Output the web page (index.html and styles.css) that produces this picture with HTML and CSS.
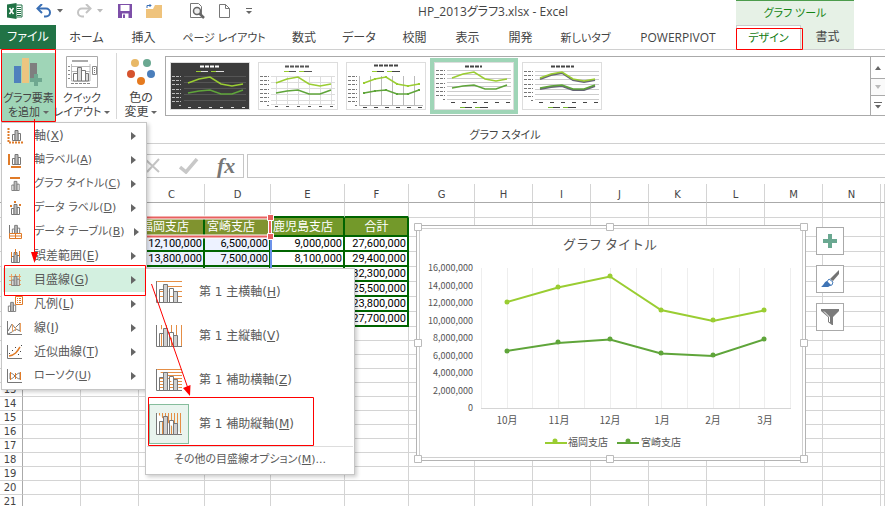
FILE: index.html
```html
<!DOCTYPE html>
<html lang="ja">
<head>
<meta charset="utf-8">
<title>HP_2013グラフ3.xlsx - Excel</title>
<link rel="stylesheet" href="styles.css">
</head>
<body>
<svg class="defs" aria-hidden="true">
  <symbol id="bars" viewBox="0 0 10 12"><path d="M1 5.500h2.500v6H1zM6.500 4.500H9v7H6.500z" fill="#fff" stroke="#777"/><path d="M3.500 1.500h3v10h-3z" fill="#bbb" stroke="#777"/></symbol>
  <symbol id="bigbars" viewBox="0 0 26 22"><path d="M.5 0v21.500H26M3.500 21V8.500h4V21M13.500 21V7.500h4V21" fill="#fff" stroke="#777"/><path d="M7.500 21.500v-18h4v18zM17.500 21.500v-11h4v11z" fill="#d0d0d0" stroke="#777"/></symbol>
  <symbol id="thumblines" viewBox="0 0 80 48"><path d="M18 21 29 17 40 15 51 22 62 24 73 22" fill="none" stroke="#9acd32" stroke-width="1.500"/><path d="M18 31 29 29 40 28 51 32 62 32 73 28" fill="none" stroke="#5fa53a" stroke-width="1.500"/></symbol>
  <symbol id="thumbmarks" viewBox="0 0 80 48"><path d="M2 14.500h9M2 18.500h9M2 22.500h9M2 27.500h9M2 31.500h9M2 35.500h9M2 39.500h9M9 43.500h2" stroke-dasharray="3 1" stroke="currentColor"/></symbol>
</svg>

<header class="top">
  <div class="titlebar">
    <div class="qat">
      <svg class="xl" width="16" height="16" viewBox="0 0 16 16"><path d="M8 2h7v12H8z" fill="#fff" stroke="#217346"/><path d="M10 4.500h4M10 6.500h4M10 8.500h4M10 10.500h4M10 12.500h4" stroke="#217346"/><path d="M0 1.500 9.500 0v16L0 14.500z" fill="#217346"/><path d="m2.500 5 4 6m0-6-4 6" stroke="#fff" stroke-width="1.500"/></svg>
      <svg class="undo" width="16" height="14" viewBox="0 0 16 14"><path d="M2 4.500h8a4 4 0 0 1 0 8H8" fill="none" stroke="#3a6fb5" stroke-width="2"/><path d="M6 0 1.500 4.500 6 9" fill="none" stroke="#3a6fb5" stroke-width="2"/></svg>
      <svg class="c1" width="6" height="4"><path d="M0 0h6L3 3.500z" fill="#666"/></svg>
      <svg class="redo" width="16" height="14" viewBox="0 0 16 14"><path d="M14 4.500H6a4 4 0 0 0 0 8h2" fill="none" stroke="#c4c4c4" stroke-width="2"/><path d="m10 0 4.500 4.500L10 9" fill="none" stroke="#c4c4c4" stroke-width="2"/></svg>
      <svg class="c2" width="6" height="4"><path d="M0 0h6L3 3.500z" fill="#bbb"/></svg>
      <svg class="save" width="14" height="14"><path d="M0 0h14v14H0z" fill="#7d4fa8"/><path d="M2.500 1h9v6h-9zM4 9.500h6.500V14H4z" fill="#fff"/><path d="M5 10.500h2V14H5z" fill="#7d4fa8"/></svg>
      <svg class="folder" width="16" height="14" viewBox="0 0 16 14"><path d="M0 5h7l2-4h7v13H0z" fill="#efc37c"/><path d="M1 4V1.500h4M3.500 0 5 1.500 3.500 3" fill="none" stroke="#3a6fb5"/></svg>
      <span class="vsep"></span>
      <svg class="preview" width="15" height="16" viewBox="0 0 15 16"><path d="M.5.500h8l3 3v11H.5z" fill="#fff" stroke="#777"/><circle cx="7" cy="8" r="3.500" fill="#eee" stroke="#666" stroke-width="1.500"/><path d="m9.500 10.500 4.500 4.500" stroke="#666" stroke-width="2.500"/></svg>
      <svg class="page" width="11" height="14"><path d="M.5.500h6l4 4v9H.5zM6.500.500v4h4" fill="#fff" stroke="#777"/></svg>
      <svg width="6" height="7"><path d="M0 .5h6" stroke="#666"/><path d="M0 3h6L3 6z" fill="#666"/></svg>
    </div>
    <h1>HP_2013グラフ3.xlsx - Excel</h1>
  </div>
  <nav class="tabs">
    <button class="file">ファイル</button><button>ホーム</button><button>挿入</button><button class="kana">ページ レイアウト</button><button>数式</button><button>データ</button><button>校閲</button><button>表示</button><button>開発</button><button class="kana">新しいタブ</button><button>POWERPIVOT</button>
  </nav>
  <div class="context">
    <div class="context-name kana">グラフ ツール</div>
    <div class="context-tabs"><button class="active kana">デザイン</button><button>書式</button></div>
  </div>
</header>

<section class="ribbon">
  <div class="commands">
    <button class="cmd pressed">
      <svg width="30" height="30" viewBox="0 0 30 30"><path d="M1 9h7v17H1z" fill="#4f81bd"/><path d="M9 1h7v25H9z" fill="#ecc580"/><path d="M17 6h7v16h-7z" fill="#7f7f7f"/><path d="M21 17h4v4h4v4h-4v4h-4v-4h-4v-4h4z" fill="#6fa890"/></svg>
      <span>グラフ要素</span><span>を追加<i class="caret"></i></span>
    </button>
    <button class="cmd">
      <svg width="32" height="32" viewBox="0 0 32 32"><path d="M.5.500h31v31H.5z" fill="#fff" stroke="#aaa"/><path d="M6 5h16" stroke="#aaa" stroke-width="2"/><path d="M5.500 8v17H24V8M6 10.500h18M6 15.500h18" fill="none" stroke="#bbb"/><path d="M2 10.500h2M2 14.500h2M2 18.500h2M2 22.500h2M5 27.500h20" stroke="#888" stroke-dasharray="3 1"/><path d="M7.500 17.500h4V25h-4zM15.500 14.500h4V25h-4z" fill="#fff" stroke="#777"/><path d="M11.500 11.500h4V25h-4zM19.500 17.500h3V25h-3z" fill="#ddd" stroke="#777"/><path d="M26.500 10.500h4v8h-4z" fill="#fff" stroke="#888"/><path d="M28 12.500h1M28 14.500h1M28 16.500h1" stroke="#777"/></svg>
      <span>クイック</span><span>レイアウト<i class="caret"></i></span>
    </button>
    <span class="rsep"></span>
    <button class="cmd colors">
      <svg width="30" height="30" viewBox="0 0 30 30"><circle cx="9" cy="6" r="4" fill="#e8b866"/><circle cx="21" cy="6" r="4" fill="#6aa891"/><circle cx="5" cy="17" r="4" fill="#d6532d"/><circle cx="25" cy="17" r="4" fill="#4a7ebb"/><circle cx="15" cy="24" r="4" fill="#e57a1f"/></svg>
      <span>色の</span><span>変更<i class="caret"></i></span>
    </button>
  </div>
  <div class="styles">
    <div class="gallery">
      <button class="thumb dark" aria-label="1"><svg width="78" height="46" viewBox="1 1 78 46"><path d="M14 14.500h62M14 20.500h62M14 26.500h62M14 32.500h62M14 38.500h62" stroke="#555"/><path d="M30 4.500h19" stroke="#fff" stroke-width="2" stroke-dasharray="4 1"/><path d="M26 9.500h5M41 9.500h5" stroke="#9acd32"/><path d="M31 9.500h7M46 9.500h8M18 45.500h3M28 45.500h3M39 45.500h3M50 45.500h3M61 45.500h3M72 45.500h3" stroke="#ddd"/><use href="#thumbmarks" width="80" height="48"/><use href="#thumblines" width="80" height="48"/></svg></button>
      <button class="thumb" aria-label="2"><svg width="78" height="46" viewBox="1 1 78 46"><path d="M13 14.500h64M13 20.500h64M13 26.500h64M13 32.500h64M13 38.500h64M13 42.500h64M18.500 14v28M29.500 14v28M40.500 14v28M51.500 14v28M62.500 14v28M73.500 14v28" stroke="#ddd"/><path d="M27 4.500h24" stroke="#555" stroke-width="2" stroke-dasharray="4 1"/><path d="M26 9.500h5M41 9.500h5" stroke="#9acd32"/><path d="M31 9.500h7M46 9.500h8M17 44.500h3M28 44.500h3M39 44.500h3M50 44.500h3M61 44.500h3M72 44.500h3" stroke="#555"/><use href="#thumbmarks" width="80" height="48"/><use href="#thumblines" width="80" height="48"/></svg></button>
      <button class="thumb" aria-label="3"><svg width="78" height="46" viewBox="1 1 78 46"><path d="M13.500 14v29M24.500 14v29M35.500 14v29M46.500 14v29M57.500 14v29M68.500 14v29M13 43.500h64" stroke="#bbb"/><path d="M28 3.500h24" stroke="#444" stroke-width="2" stroke-dasharray="4 1"/><path d="M26 9.500h5M41 9.500h5" stroke="#9acd32"/><path d="M31 9.500h7M46 9.500h8M17 45.500h4M28 45.500h4M39 45.500h4M50 45.500h4M61 45.500h4M72 45.500h4" stroke="#444"/><use href="#thumbmarks" width="80" height="48"/><use href="#thumblines" width="80" height="48"/><path d="M17 20h2v2h-2zM28 16h2v2h-2zM39 14h2v2h-2zM50 21h2v2h-2zM61 23h2v2h-2zM72 21h2v2h-2z" fill="#9acd32"/><path d="M17 30h2v2h-2zM28 28h2v2h-2zM39 27h2v2h-2zM50 31h2v2h-2zM61 31h2v2h-2zM72 27h2v2h-2z" fill="#5fa53a"/></svg></button>
      <button class="thumb chosen" aria-label="4"><svg width="78" height="46" viewBox="1 1 78 46"><path d="M13 8.500h64M13 12.500h64M13 16.500h64M13 20.500h64M13 24.500h64M13 29.500h64M13 33.500h64M13 37.500h64" stroke="#ccc"/><path d="M31 4.500h17" stroke="#444" stroke-width="2" stroke-dasharray="4 1"/><path d="M17 40.500h4M28 40.500h4M39 40.500h4M50 40.500h4M61 40.500h4M72 40.500h4M31 45.500h7M46 45.500h8" stroke="#444"/><path d="M26 45.500h5M41 45.500h5" stroke="#76b82f"/><use href="#thumbmarks" y="-6" width="80" height="48"/><use href="#thumblines" y="-5" width="80" height="48"/></svg></button>
      <button class="thumb" aria-label="5"><svg width="78" height="46" viewBox="1 1 78 46"><path d="M13 9.500h64M13 13.500h64M13 17.500h64M13 22.500h64M13 27.500h64M13 32.500h64M13 37.500h64" stroke="#ccc"/><path d="M29 4.500h23" stroke="#444" stroke-width="2" stroke-dasharray="4 1"/><path d="M18 17 29 13 40 11 51 18 62 20 73 18M18 27 29 25 40 24 51 28 62 28 73 24" fill="none" stroke="#667" stroke-width="2"/><path d="M17 40.500h4M28 40.500h4M39 40.500h4M50 40.500h4M61 40.500h4M72 40.500h4M31 45.500h7M46 45.500h8" stroke="#444"/><path d="M26 45.500h5M41 45.500h5" stroke="#76b82f"/><use href="#thumbmarks" y="-5" width="80" height="48"/><use href="#thumblines" y="-5" width="80" height="48"/></svg></button>
      <div class="scroll">
        <button aria-label="上"><svg width="6" height="4"><path d="M0 4h6L3 0z" fill="#666"/></svg></button>
        <button class="off" aria-label="下"><svg width="6" height="4"><path d="M0 0h6L3 4z" fill="#bbb"/></svg></button>
        <button aria-label="その他"><svg width="8" height="7"><path d="M0 .5h8" stroke="#666"/><path d="M1 3h6L4 6.500z" fill="#666"/></svg></button>
      </div>
    </div>
    <div class="group-name kana">グラフ スタイル</div>
  </div>
</section>

<section class="formula">
  <div class="fxbox">
    <svg width="16" height="16" viewBox="0 0 16 16"><path d="m1 2 13 12M14 1 2 14" stroke="#c4c4c4" stroke-width="2"/></svg>
    <svg width="20" height="16" viewBox="0 0 20 16"><path d="m1 9 6 5L18 1" fill="none" stroke="#c8c8c8" stroke-width="3.500"/></svg>
    <span class="fx">fx</span>
  </div>
  <input aria-label="数式バー">
</section>

<main class="sheet">
  <table>
    <colgroup><col class="w23"><col class="w58"><col class="w58"><col class="w66"><col class="w66"><col class="w74"><col class="w64"><col class="w66"><col class="w58"><col class="w58"><col class="w58"><col class="w58"><col class="w58"><col class="w58"><col class="w58"><col></colgroup>
    <thead><tr><th><th><th><th>C<th>D<th>E<th>F<th>G<th>H<th>I<th>J<th>K<th>L<th>M<th>N<th></tr></thead>
    <tbody>
    <tr class="r1"><th><td><td><td class="g"><td class="g"><td class="g"><td class="g"><td><td><td><td><td><td><td><td><td></tr>
    <tr class="r2"><th><td><td><td class="d h s">福岡支店<td class="d h s">宮崎支店<td class="d h">鹿児島支店<td class="d h mid">合計<td><td><td><td><td><td><td><td><td></tr>
    <tr class="rd"><th><td><td><td class="d v">12,100,000<td class="d v">6,500,000<td class="d">9,000,000<td class="d">27,600,000<td><td><td><td><td><td><td><td><td></tr>
    <tr class="rd"><th><td><td><td class="d v">13,800,000<td class="d v">7,500,000<td class="d">8,100,000<td class="d">29,400,000<td><td><td><td><td><td><td><td><td></tr>
    <tr class="rd"><th><td><td><td class="d v"><td class="d v"><td class="d"><td class="d">32,300,000<td><td><td><td><td><td><td><td><td></tr>
    <tr class="rd"><th><td><td><td class="d v"><td class="d v"><td class="d"><td class="d">25,500,000<td><td><td><td><td><td><td><td><td></tr>
    <tr class="rd"><th><td><td><td class="d v"><td class="d v"><td class="d"><td class="d">23,800,000<td><td><td><td><td><td><td><td><td></tr>
    <tr class="rd"><th><td><td><td class="d v"><td class="d v"><td class="d"><td class="d">27,700,000<td><td><td><td><td><td><td><td><td></tr>
    <tr><th><td><td><td><td><td><td><td><td><td><td><td><td><td><td><td></tr>
    <tr><th><td><td><td><td><td><td><td><td><td><td><td><td><td><td><td></tr>
    <tr><th><td><td><td><td><td><td><td><td><td><td><td><td><td><td><td></tr>
    <tr><th><td><td><td><td><td><td><td><td><td><td><td><td><td><td><td></tr>
    <tr><th>13<td><td><td><td><td><td><td><td><td><td><td><td><td><td><td></tr>
    <tr><th>14<td><td><td><td><td><td><td><td><td><td><td><td><td><td><td></tr>
    <tr><th>15<td><td><td><td><td><td><td><td><td><td><td><td><td><td><td></tr>
    <tr><th>16<td><td><td><td><td><td><td><td><td><td><td><td><td><td><td></tr>
    <tr><th>17<td><td><td><td><td><td><td><td><td><td><td><td><td><td><td></tr>
    <tr><th>18<td><td><td><td><td><td><td><td><td><td><td><td><td><td><td></tr>
    <tr><th>19<td><td><td><td><td><td><td><td><td><td><td><td><td><td><td></tr>
    <tr><th>20<td><td><td><td><td><td><td><td><td><td><td><td><td><td><td></tr>
    <tr><th>21<td><td><td><td><td><td><td><td><td><td><td><td><td><td><td></tr>
    </tbody>
  </table>
</main>

<svg class="layer" width="885" height="506" aria-hidden="true">
  <path d="M139 217.500h131v19H139" fill="none" stroke="#fff" stroke-width="4"/>
  <path d="M139 217.500h131v19H139" fill="none" stroke="#e8605f" stroke-width="2"/>
  <path d="M271 239v30" stroke="#6d93ea" stroke-width="2"/>
  <path d="M267.500 214.500h6v6h-6zM267.500 233.500h6v6h-6z" fill="#e8605f" stroke="#fff"/>
</svg>

<svg class="chart" width="396" height="242" viewBox="413 222 396 242" role="img" aria-label="グラフ タイトル">
  <path d="M416.500 225.500h389v235h-389z" fill="#fff" stroke="#b4b4b4"/>
  <path d="M419.500 228.500h383v229h-383z" fill="#fff" stroke="#d0d0d0"/>
  <path d="M481.500 268v140M507.500 268v140M532.500 268v140M558.500 268v140M584.500 268v140M610.500 268v140M636.500 268v140M661.500 268v140M687.500 268v140M713.500 268v140M739.500 268v140M764.500 268v140M790.500 268v140" stroke="#eee"/>
  <path d="M481 408.500h310" stroke="#d5d5d5"/>
  <text class="ctitle" x="610" y="249">グラフ タイトル</text>
  <g class="vals"><text x="473" y="271">16,000,000</text><text x="473" y="289">14,000,000</text><text x="473" y="306">12,000,000</text><text x="473" y="324">10,000,000</text><text x="473" y="341">8,000,000</text><text x="473" y="359">6,000,000</text><text x="473" y="376">4,000,000</text><text x="473" y="394">2,000,000</text><text x="473" y="411">0</text></g>
  <g class="cats"><text x="507" y="424">10月</text><text x="559" y="424">11月</text><text x="610" y="424">12月</text><text x="662" y="424">1月</text><text x="713" y="424">2月</text><text x="765" y="424">3月</text></g>
  <g fill="none" stroke-width="2"><path d="m507 302 51-14.500 52-11 51 33.500 52 11 51-10.500M545 443h22" stroke="#9acd32"/><path d="m507 351 51-8 52-3.500 51 14 52 2.500 51-16.500M617 443h22" stroke="#5fa53a"/></g>
  <g fill="#9acd32"><circle cx="507" cy="302" r="2.500"/><circle cx="558" cy="287" r="2.500"/><circle cx="610" cy="276" r="2.500"/><circle cx="661" cy="310" r="2.500"/><circle cx="713" cy="320" r="2.500"/><circle cx="764" cy="310" r="2.500"/><circle cx="555" cy="441" r="2.500"/></g>
  <g fill="#5fa53a"><circle cx="507" cy="351" r="2.500"/><circle cx="558" cy="342" r="2.500"/><circle cx="610" cy="339" r="2.500"/><circle cx="661" cy="353" r="2.500"/><circle cx="713" cy="355" r="2.500"/><circle cx="764" cy="339" r="2.500"/><circle cx="628" cy="441" r="2.500"/></g>
  <g class="leg"><text x="568" y="446">福岡支店</text><text x="641" y="446">宮崎支店</text></g>
  <path d="M414.500 223.500h7v7h-7zM606.500 223.500h7v7h-7zM800.500 223.500h7v7h-7zM414.500 339.500h7v7h-7zM800.500 339.500h7v7h-7zM414.500 455.500h7v7h-7zM606.500 455.500h7v7h-7zM800.500 455.500h7v7h-7z" fill="#fff" stroke="#bbb"/>
</svg>

<div class="chart-tools">
  <button aria-label="グラフ要素"><svg width="14" height="14"><path d="M5 0h4v5h5v4H9v5H5V9H0V5h5z" fill="#6aa891"/></svg></button>
  <button aria-label="グラフ スタイル"><svg width="18" height="18" viewBox="0 0 18 18"><path d="M18 0v4l-6 7-3-2z" fill="#737373"/><path d="m8 9 4 3-1 3-4 1-2-3z" fill="#fff" stroke="#4a7ebb"/><path d="M6 11c-3 1-3 4-6 6h7l3-2z" fill="#3f74b5"/></svg></button>
  <button aria-label="グラフ フィルター"><svg width="18" height="17" viewBox="0 0 18 17"><path d="M0 0h18v2l-6 6v8h-1L7 13V8L0 2z" fill="#7b7b7b"/><path d="M3 2.500 8.500 8v5" fill="none" stroke="#fff"/></svg></button>
</div>

<div class="menu" role="menu">
  <button role="menuitem"><svg width="18" height="16"><path d="M2.500 0v14.500H18" fill="none" stroke="#e07b28" stroke-width="2" stroke-dasharray="2 1"/><use href="#bars" x="5" y="1" width="11" height="12"/></svg><span>軸(<u>X</u>)</span></button>
  <button role="menuitem"><svg width="18" height="16"><path d="M3 2v11M5 15h10" stroke="#e07b28" stroke-width="2"/><use href="#bars" x="5" y="1" width="11" height="12"/></svg><span class="kana">軸ラベル(<u>A</u>)</span></button>
  <button role="menuitem"><svg width="18" height="16"><path d="M4 2h10" stroke="#e07b28" stroke-width="2"/><use href="#bars" x="4" y="4" width="11" height="11"/></svg><span class="kana">グラフ タイトル(<u>C</u>)</span></button>
  <button role="menuitem"><svg width="18" height="16"><path d="M4 5h2v2H4zM8 1h2v2H8zM13 4h2v2h-2z" fill="#e07b28"/><use href="#bars" x="4" y="3" width="11" height="12"/></svg><span class="kana">データ ラベル(<u>D</u>)</span></button>
  <button role="menuitem"><svg width="18" height="16"><path d="M3.500 1v9" stroke="#777"/><use href="#bars" x="5" y="0" width="10" height="11"/><path d="M3.500 9.500h12v5h-12zM3 12h13M9.500 9.500v5" fill="#fff" stroke="#e07b28"/></svg><span class="kana">データ テーブル(<u>B</u>)</span></button>
  <button role="menuitem"><svg width="18" height="16"><use href="#bars" x="4" y="3" width="11" height="12"/><path d="M5.500 4v6M9.500 1v6M13.500 3v6" stroke="#e07b28"/></svg><span>誤差範囲(<u>E</u>)</span></button>
  <button role="menuitem" class="on"><svg width="18" height="16"><path d="M3 4.500h12M3 8.500h12M3 12.500h12M5.500 2v12M9.500 2v12M13.500 2v12" stroke="#e9a163"/><use href="#bars" x="4" y="3" width="11" height="11"/></svg><span>目盛線(<u>G</u>)</span></button>
  <button role="menuitem"><svg width="18" height="18"><use href="#bars" x="1" y="6" width="10" height="11"/><path d="M9.500 1.500h7v8h-7z" fill="#fff" stroke="#e07b28"/><path d="M11 3.500h1m1 0h2M11 5.500h1m1 0h2M11 7.500h1m1 0h2" stroke="#e07b28"/></svg><span>凡例(<u>L</u>)</span></button>
  <button role="menuitem"><svg width="18" height="16"><path d="M1.500 1v13.500H16M2 11l4-7 3 4 5-5v8l-4-2-4 3-4 2" fill="none" stroke="#777"/><path d="M6.500 4v8M9.500 7v4M14.500 3v9" stroke="#e9a163"/></svg><span>線(<u>I</u>)</span></button>
  <button role="menuitem"><svg width="18" height="16"><path d="M1.500 1v13.500H16" fill="none" stroke="#777"/><path d="M3 12c6-1 8-4 11-9" fill="none" stroke="#e07b28" stroke-width="1.500"/><path d="M3 9h1v1H3zM6 6h1v1H6zM9 3h1v1H9zM12 10h1v1h-1zM14 7h1v1h-1zM15 1h1v1h-1z" fill="#444"/></svg><span>近似曲線(<u>T</u>)</span></button>
  <button role="menuitem"><svg width="18" height="16"><path d="M1.500 1v13.500H16" fill="none" stroke="#777"/><path d="M4 5c4 0 6 6 10 6V5c-4 0-6 6-10 6z" fill="none" stroke="#777"/><path d="M4.500 4v8M9.500 5v6M14.500 4v8" stroke="#e07b28"/></svg><span class="kana">ローソク(<u>U</u>)</span></button>
</div>

<div class="submenu" role="menu">
  <button role="menuitem"><i class="pic"><svg width="26" height="22"><path d="M0 .5h26M0 5.500h26M0 10.500h26M0 15.500h26" stroke="#e58e45"/><use href="#bigbars" width="26" height="22"/></svg></i><span>第 1 主横軸(<u>H</u>)</span></button>
  <button role="menuitem"><i class="pic"><svg width="26" height="22"><path d="M5.500 0v21M10.500 0v21M15.500 0v21M20.500 0v21M25.500 0v21" stroke="#e58e45"/><use href="#bigbars" width="26" height="22"/></svg></i><span>第 1 主縦軸(<u>V</u>)</span></button>
  <button role="menuitem"><i class="pic"><svg width="26" height="22"><path d="M0 .5h26M0 3.500h26M0 6.500h26M0 9.500h26M0 12.500h26M0 15.500h26M0 18.500h26" stroke="#e58e45"/><use href="#bigbars" width="26" height="22"/></svg></i><span>第 1 補助横軸(<u>Z</u>)</span></button>
  <button role="menuitem"><i class="pic picked"><svg width="26" height="22"><path d="M3.500 0v21M6.500 0v21M9.500 0v21M12.500 0v21M15.500 0v21M18.500 0v21M21.500 0v21M24.500 0v21" stroke="#e58e45"/><use href="#bigbars" width="26" height="22"/></svg></i><span>第 1 補助縦軸(<u>M</u>)</span></button>
  <hr>
  <button role="menuitem" class="more kana"><span>その他の目盛線オプション(<u>M</u>)...</span></button>
</div>

<svg class="layer notes" width="885" height="506" aria-hidden="true">
  <g fill="none" stroke="#f00"><path d="M1.500 49.500h54v72h-54zM736.500 28.500h66v21h-66zM4.500 265.500h141v30h-141zM148.500 397.500h165v48h-165zM34.500 119v136M151.500 284l36 103" /></g>
  <path d="M31 252h7l-3.500 11zM183 388l7.500-3-.5 11z" fill="#f00"/>
</svg>
</body>
</html>
```
FILE: styles.css
```css
* { box-sizing: border-box; }
body {
  margin: 0;
  height: 100vh;
  overflow: hidden;
  position: relative;
  background: #fff;
  color: #444;
  font: 12px/14px "Open Sans", "Noto Sans CJK JP", sans-serif;
  font-feature-settings: "palt";
}
button {
  font: inherit;
  font-feature-settings: inherit;
  color: inherit;
  background: none;
  border: 0;
  padding: 0;
  white-space: nowrap;
}
svg { display: block; flex: none; }
.defs { position: absolute; width: 0; height: 0; }
.kana { font-size: 11px; }

/* title bar and tabs */
.top {
  display: grid;
  grid-template-columns: 1fr 118px 31px;
  grid-template-rows: 25px 25px;
  border-bottom: 1px solid #d0d0d0;
  height: 50px;
}
.titlebar { display: flex; align-items: center; }
.qat { display: flex; align-items: center; width: 250px; height: 22px; padding-left: 7px; }
.xl { margin-right: 13px; }
.undo { margin-right: 5px; }
.c1 { margin-right: 13px; }
.redo { margin-right: 5px; }
.c2 { margin-right: 15px; }
.save { margin-right: 14px; }
.folder { margin-right: 13px; }
.vsep { width: 1px; height: 16px; background: #d8d8d8; margin-right: 15px; }
.preview { margin-right: 14px; }
.page { margin-right: 16px; }
.titlebar { align-items: flex-start; }
h1 { flex: 1; margin: 0; font-size: 12px; line-height: 23px; font-weight: 400; text-align: center; }
.tabs {
  grid-row: 2;
  display: grid;
  grid-template-columns: 56px 61px 53px 108px 52px 58px 53px 53px 53px 77px 108px;
}
.tabs .file { background: #217346; color: #fff; height: 24px; }
.context {
  grid-column: 2;
  grid-row: 1 / 3;
  height: 49px;
  display: grid;
  grid-template-rows: 24px 24px;
  background: #e6f1e6;
  border-top: 1px solid #4c9c4c;
}
.context-name { text-align: center; line-height: 23px; color: #158515; }
.context-tabs { display: grid; grid-template-columns: 65px 53px; font-size: 12px; }
.context-tabs .active { background: #fff; border: 1px solid #ccc; border-bottom: 0; color: #117a11; }

/* ribbon */
.ribbon { display: flex; height: 94px; border-bottom: 1px solid #d0d0d0; }
.commands { display: flex; width: 165px; padding: 3px 0 0 2px; }
.cmd { display: flex; flex-direction: column; align-items: center; width: 54px; height: 68px; font-size: 11px; }
.cmd svg { margin: 3px 0; height: 32px; }
.cmd.pressed { background: #9fd5b7; }
.cmd.colors { width: 49px; font-size: 12px; }
.rsep { width: 1px; height: 66px; background: #d8d8d8; margin-left: 7px; }
.caret { display: inline-block; border: 3px solid transparent; border-top-color: #666; border-bottom: 0; margin: 0 0 2px 3px; }
.styles { flex: 1; min-width: 0; padding-top: 6px; }
.gallery { display: flex; height: 60px; border: 1px solid #aaa; border-right: 0; background: #fff; }
.thumb { width: 88px; height: 56px; margin-top: 1px; border: 4px solid transparent; }
.thumb svg { border: 1px solid #ddd; width: 80px; height: 48px; color: #777; }
.thumb.dark svg { background: #3c3c3c; color: #bbb; }
.thumb.chosen { border-color: #9fd5b7; }
.scroll { margin-left: auto; width: 15px; display: grid; grid-template-rows: 21px 18px 19px; border-left: 1px solid #aaa; }
.scroll button { display: grid; place-items: center; }
.scroll .off { border: solid #aaa; border-width: 1px 0; background: #fafafa; }
.group-name { padding: 12px 40px 0 0; text-align: center; }

/* formula bar */
.formula { display: flex; gap: 3px; height: 40px; padding: 10px 0 6px 112px; }
.fxbox { display: flex; align-items: center; gap: 18px; width: 132px; border: 1px solid #c6c6c6; padding-left: 32px; }
.fx { font: italic bold 22px/20px "Liberation Serif", serif; color: #777; }
.formula input { flex: 1; min-width: 0; border: 1px solid #c6c6c6; border-right: 0; font: inherit; }

/* worksheet */
table { table-layout: fixed; width: 100%; border-collapse: separate; border-spacing: 0; }
.w23 { width: 23px; } .w58 { width: 58px; } .w64 { width: 64px; } .w66 { width: 66px; } .w74 { width: 74px; }
th, td { height: 14px; padding: 0; font-weight: 400; white-space: nowrap; overflow: hidden; border: solid #d4d4d4; border-width: 0 1px 1px 0; }
th { font: 10px/12px "DejaVu Sans", sans-serif; }
tbody th { border-right-color: #aaa; text-align: center; padding-right: 2px; }
thead th { height: 19px; padding-top: 3px; border-bottom-color: #aaa; }
td { font: 11px/11px "Roboto", "Noto Sans CJK JP", sans-serif; color: #000; }
.r1 > * { height: 15px; }
.r2 > * { height: 19px; }
.rd > * { height: 15px; }
td.g { border-bottom: 2px solid #006400; }
td.d { border-right: 2px solid #006400; border-bottom: 2px solid #006400; text-align: right; background: #fff; padding-right: 1px; }
td.v { background: #edf2ff; }
td.h { background: #73992a; color: #fff; font-size: 12px; line-height: 14px; text-align: left; padding-left: 2px; }
td.s { background: #80932f; }
td.mid { text-align: center; }

.layer { position: absolute; left: 0; top: 0; pointer-events: none; }

/* chart */
.chart { position: absolute; left: 413px; top: 222px; }
.chart text { fill: #555; font: 10px "Noto Sans CJK JP", sans-serif; }
.chart .ctitle { font-size: 13px; text-anchor: middle; }
.chart .vals text { font-size: 9px; text-anchor: end; }
.chart .cats text { text-anchor: middle; }
.chart-tools { position: absolute; left: 816px; top: 227px; display: grid; gap: 10px; }
.chart-tools button { display: grid; place-items: center; width: 28px; height: 28px; background: #fff; border: 1px solid #aaa; }

/* menus */
.menu, .submenu {
  position: absolute;
  background: #fff;
  border: 1px solid #c6c6c6;
  box-shadow: 2px 2px 4px rgba(0, 0, 0, .2);
  font-family: "DejaVu Sans", "Noto Sans CJK JP", sans-serif;
  color: #5a5a5a;
}
.menu { left: 1px; top: 122px; width: 146px; padding: 1px; }
.menu button { display: flex; align-items: center; width: 100%; height: 24px; padding: 0 9px 0 3px; gap: 10px; }
.menu button::after { content: ""; margin-left: auto; border: 4px solid transparent; border-left: 5px solid #666; border-right: 0; }
.menu .on { background: #d3f0e0; }
.submenu { left: 145px; top: 268px; width: 210px; padding: 1px; }
.submenu button { display: flex; align-items: center; gap: 10px; width: 100%; height: 44px; padding-left: 2px; }
.pic { display: grid; place-items: center; width: 40px; height: 40px; border: 1px solid transparent; }
.pic.picked { background: #e9f4ee; border-color: #86bd9c; }
.submenu hr { margin: 0; border: 0; border-top: 1px solid #ddd; }
.submenu .more { height: 26px; justify-content: center; padding: 0; }
```
